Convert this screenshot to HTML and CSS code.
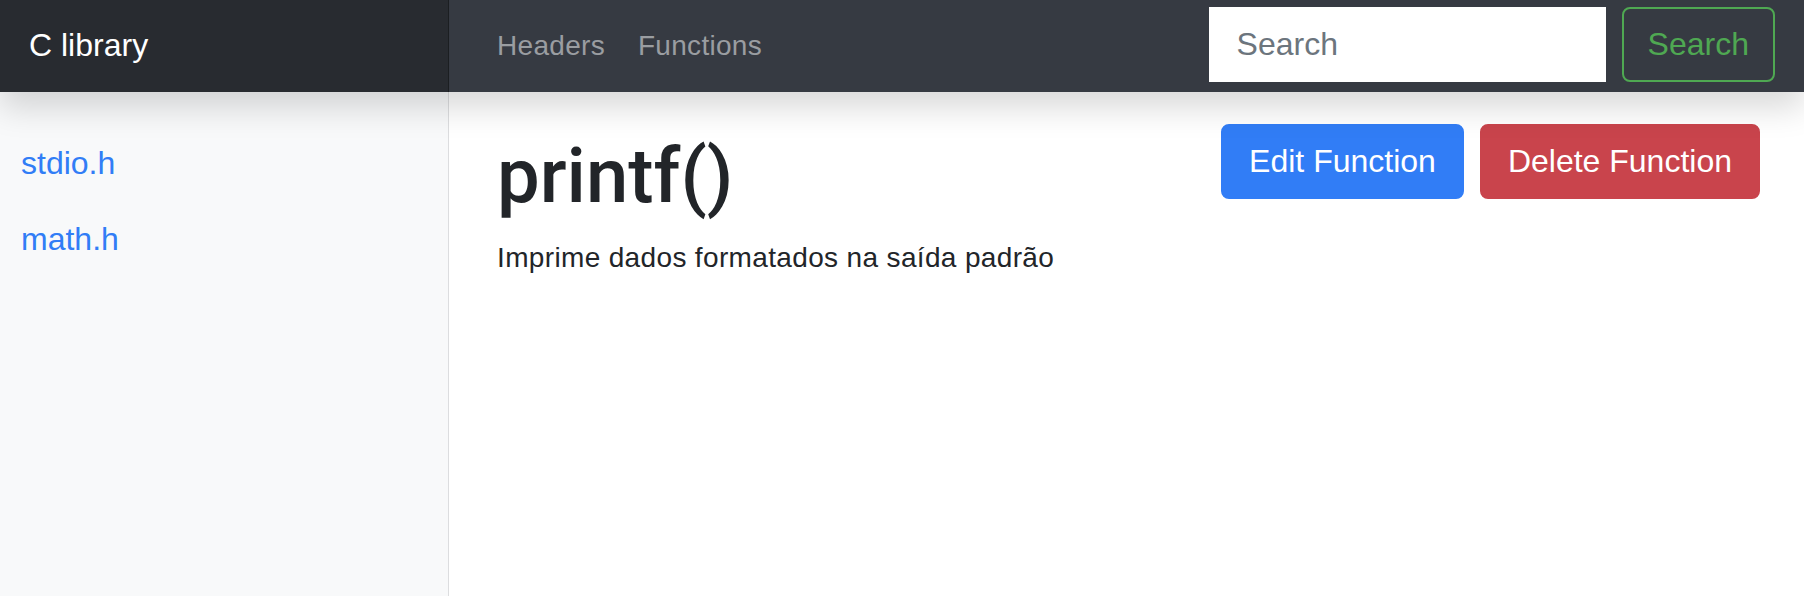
FILE: index.html
```html
<!DOCTYPE html>
<html lang="pt">
<head>
<meta charset="utf-8">
<title>C library</title>
<link rel="stylesheet" href="styles.css">
</head>
<body>
<header class="navbar">
  <a class="brand" href="#">C library</a>
  <ul class="top-nav">
    <li><a href="#">Headers</a></li>
    <li><a href="#">Functions</a></li>
  </ul>
  <form class="search-form">
    <input class="search-input" type="text" placeholder="Search">
    <button class="btn btn-outline-success" type="button">Search</button>
  </form>
</header>
<div class="layout">
  <nav class="sidebar">
    <a class="side-link" href="#">stdio.h</a>
    <a class="side-link" href="#">math.h</a>
  </nav>
  <main class="main">
    <div class="page-header">
      <h1 class="title">printf()</h1>
      <div class="actions">
        <button class="btn btn-primary" type="button">Edit Function</button>
        <button class="btn btn-danger" type="button">Delete Function</button>
      </div>
    </div>
    <p class="description">Imprime dados formatados na saída padrão</p>
  </main>
</div>
</body>
</html>
```

FILE: styles.css
```css
* { box-sizing: border-box; }

html, body {
  margin: 0;
  padding: 0;
  height: 100%;
}

body {
  font-family: "Liberation Sans", Arial, sans-serif;
  color: #222529;
  background: #fff;
  overflow: hidden;
}

a { text-decoration: none; }

.navbar {
  position: relative;
  z-index: 2;
  display: flex;
  align-items: center;
  height: 92px;
  background: #363a42;
  box-shadow: 0 16px 32px rgba(0, 0, 0, 0.15);
}

.brand {
  display: flex;
  align-items: center;
  width: 449px;
  height: 92px;
  padding-left: 29px;
  padding-bottom: 2px;
  font-size: 32px;
  line-height: 48px;
  color: #fff;
  background: #282b30;
  box-shadow: inset -1px 0 0 rgba(0, 0, 0, 0.3);
}

.top-nav {
  display: flex;
  gap: 33px;
  list-style: none;
  margin: 0 0 0 48px;
  padding: 0;
}

.top-nav a {
  font-size: 28px;
  line-height: 42px;
  letter-spacing: 0.3px;
  color: #9a9da1;
}

.search-form {
  display: flex;
  gap: 16px;
  margin-left: auto;
  margin-right: 29px;
  margin-bottom: 3px;
}

.search-input {
  width: 397px;
  height: 75px;
  padding: 0 24px 0 28px;
  border: 0;
  border-radius: 0;
  background: #fff;
  font-family: "Liberation Sans", Arial, sans-serif;
  font-size: 32px;
  color: #495057;
  outline: none;
}

.search-input::placeholder { color: #6c757d; }

.btn {
  display: inline-block;
  height: 75px;
  padding: 0 24px;
  border: 2px solid transparent;
  border-radius: 8px;
  font-family: "Liberation Sans", Arial, sans-serif;
  font-size: 32px;
  line-height: 71px;
  white-space: nowrap;
  cursor: pointer;
}

.btn-outline-success {
  color: #4fa852;
  border-color: #4fa852;
  background: transparent;
}

.btn-primary {
  padding: 0 26px;
  color: #fff;
  background: #317df6;
  border-color: #317df6;
}

.btn-danger {
  padding: 0 26px;
  color: #fff;
  background: #c9444c;
  border-color: #c9444c;
}

.layout {
  display: flex;
  height: 504px;
}

.sidebar {
  display: flex;
  flex-direction: column;
  width: 449px;
  flex: 0 0 449px;
  padding-top: 33px;
  background: #f8f9fa;
  border-right: 1px solid #dcdddf;
}

.side-link {
  display: block;
  padding-left: 21px;
  font-size: 32px;
  line-height: 76px;
  color: #317df6;
}

.main {
  flex: 1;
  padding: 32px 44px 0 48px;
}

.page-header {
  display: flex;
  justify-content: space-between;
  align-items: flex-start;
  margin-bottom: 9px;
}

.title {
  margin: 0;
  font-family: Roboto, "Liberation Sans", sans-serif;
  font-size: 76px;
  font-weight: 500;
  line-height: 104px;
  color: #222529;
}

.actions {
  display: flex;
  gap: 16px;
}

.description {
  margin: 0;
  font-size: 28px;
  line-height: 42px;
  letter-spacing: 0.35px;
}
```
